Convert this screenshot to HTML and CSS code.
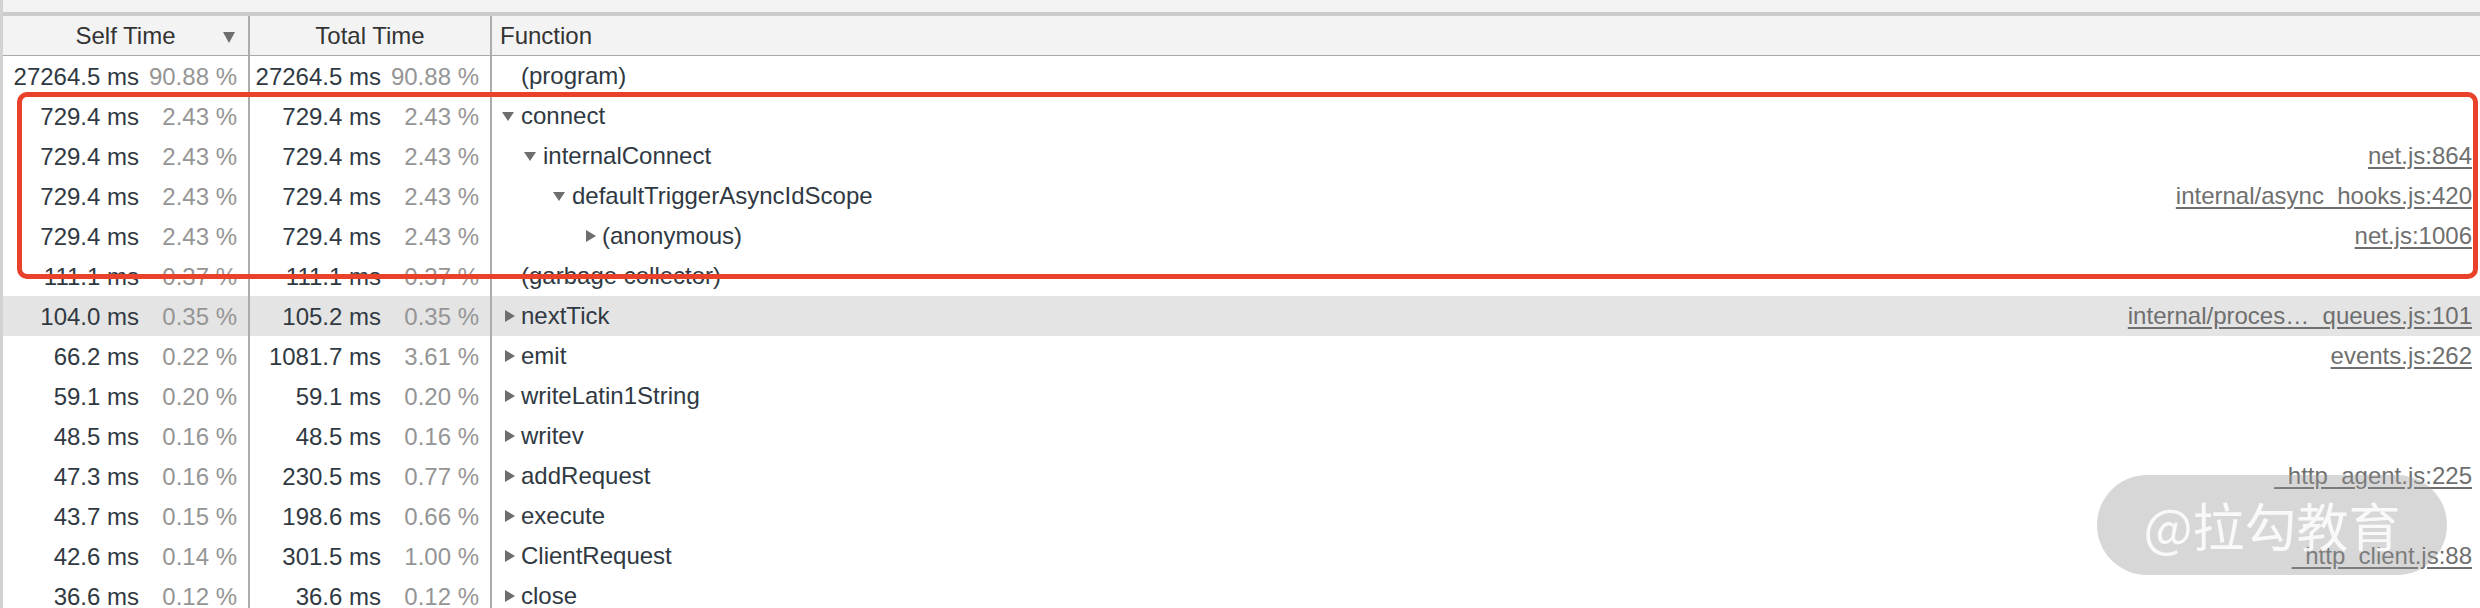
FILE: index.html
```html
<!DOCTYPE html>
<html lang="en">
<head>
<meta charset="utf-8">
<title>Bottom-Up Profile</title>
<link rel="stylesheet" href="styles.css">
</head>
<body>
<div class="panel">
  <div class="toolbar"></div>
  <div class="grid">
    <div class="row head">
      <div class="cell hcell sortable"><span></span><span class="htext">Self Time</span><span class="sort-arrow"></span></div>
      <div class="cell hcell"><span class="htext">Total Time</span></div>
      <div class="cell hfn">Function</div>
    </div>

    <div class="row">
      <div class="cell num"><span class="ms">27264.5 ms</span><span class="pct">90.88 %</span></div>
      <div class="cell num"><span class="ms">27264.5 ms</span><span class="pct">90.88 %</span></div>
      <div class="cell fn d0"><span class="tw"></span><span class="name">(program)</span></div>
    </div>
    <div class="row">
      <div class="cell num"><span class="ms">729.4 ms</span><span class="pct">2.43 %</span></div>
      <div class="cell num"><span class="ms">729.4 ms</span><span class="pct">2.43 %</span></div>
      <div class="cell fn d0"><span class="tw open"></span><span class="name">connect</span></div>
    </div>
    <div class="row">
      <div class="cell num"><span class="ms">729.4 ms</span><span class="pct">2.43 %</span></div>
      <div class="cell num"><span class="ms">729.4 ms</span><span class="pct">2.43 %</span></div>
      <div class="cell fn d1"><span class="tw open"></span><span class="name">internalConnect</span><a class="src">net.js:864</a></div>
    </div>
    <div class="row">
      <div class="cell num"><span class="ms">729.4 ms</span><span class="pct">2.43 %</span></div>
      <div class="cell num"><span class="ms">729.4 ms</span><span class="pct">2.43 %</span></div>
      <div class="cell fn d2"><span class="tw open"></span><span class="name">defaultTriggerAsyncIdScope</span><a class="src">internal/async_hooks.js:420</a></div>
    </div>
    <div class="row">
      <div class="cell num"><span class="ms">729.4 ms</span><span class="pct">2.43 %</span></div>
      <div class="cell num"><span class="ms">729.4 ms</span><span class="pct">2.43 %</span></div>
      <div class="cell fn d3"><span class="tw closed"></span><span class="name">(anonymous)</span><a class="src">net.js:1006</a></div>
    </div>
    <div class="row">
      <div class="cell num"><span class="ms">111.1 ms</span><span class="pct">0.37 %</span></div>
      <div class="cell num"><span class="ms">111.1 ms</span><span class="pct">0.37 %</span></div>
      <div class="cell fn d0"><span class="tw"></span><span class="name">(garbage collector)</span></div>
    </div>
    <div class="row selected">
      <div class="cell num"><span class="ms">104.0 ms</span><span class="pct">0.35 %</span></div>
      <div class="cell num"><span class="ms">105.2 ms</span><span class="pct">0.35 %</span></div>
      <div class="cell fn d0"><span class="tw closed"></span><span class="name">nextTick</span><a class="src">internal/proces…_queues.js:101</a></div>
    </div>
    <div class="row">
      <div class="cell num"><span class="ms">66.2 ms</span><span class="pct">0.22 %</span></div>
      <div class="cell num"><span class="ms">1081.7 ms</span><span class="pct">3.61 %</span></div>
      <div class="cell fn d0"><span class="tw closed"></span><span class="name">emit</span><a class="src">events.js:262</a></div>
    </div>
    <div class="row">
      <div class="cell num"><span class="ms">59.1 ms</span><span class="pct">0.20 %</span></div>
      <div class="cell num"><span class="ms">59.1 ms</span><span class="pct">0.20 %</span></div>
      <div class="cell fn d0"><span class="tw closed"></span><span class="name">writeLatin1String</span></div>
    </div>
    <div class="row">
      <div class="cell num"><span class="ms">48.5 ms</span><span class="pct">0.16 %</span></div>
      <div class="cell num"><span class="ms">48.5 ms</span><span class="pct">0.16 %</span></div>
      <div class="cell fn d0"><span class="tw closed"></span><span class="name">writev</span></div>
    </div>
    <div class="row">
      <div class="cell num"><span class="ms">47.3 ms</span><span class="pct">0.16 %</span></div>
      <div class="cell num"><span class="ms">230.5 ms</span><span class="pct">0.77 %</span></div>
      <div class="cell fn d0"><span class="tw closed"></span><span class="name">addRequest</span><a class="src">_http_agent.js:225</a></div>
    </div>
    <div class="row">
      <div class="cell num"><span class="ms">43.7 ms</span><span class="pct">0.15 %</span></div>
      <div class="cell num"><span class="ms">198.6 ms</span><span class="pct">0.66 %</span></div>
      <div class="cell fn d0"><span class="tw closed"></span><span class="name">execute</span></div>
    </div>
    <div class="row">
      <div class="cell num"><span class="ms">42.6 ms</span><span class="pct">0.14 %</span></div>
      <div class="cell num"><span class="ms">301.5 ms</span><span class="pct">1.00 %</span></div>
      <div class="cell fn d0"><span class="tw closed"></span><span class="name">ClientRequest</span><a class="src">_http_client.js:88</a></div>
    </div>
    <div class="row">
      <div class="cell num"><span class="ms">36.6 ms</span><span class="pct">0.12 %</span></div>
      <div class="cell num"><span class="ms">36.6 ms</span><span class="pct">0.12 %</span></div>
      <div class="cell fn d0"><span class="tw closed"></span><span class="name">close</span></div>
    </div>
  </div>

  <div class="highlight-box"></div>
  <div class="watermark">@拉勾教育</div>
</div>
</body>
</html>
```

FILE: styles.css
```css
html, body {
  margin: 0;
  padding: 0;
  background: #ffffff;
}

body {
  width: 2480px;
  height: 608px;
  overflow: hidden;
  font-family: "Liberation Sans", Arial, sans-serif;
  font-size: 24px;
  color: #303942;
}

.panel {
  position: relative;
  width: 2480px;
  height: 608px;
  box-sizing: border-box;
  border-left: 3px solid #d2d2d2;
}

.toolbar {
  height: 12px;
  background: #f3f3f3;
  border-bottom: 4px solid #cccccc;
}

.row {
  display: grid;
  grid-template-columns: 247px 242px 1fr;
  height: 40px;
  line-height: 42px;
}

.row.selected {
  background: #e4e4e4;
}

.cell {
  box-sizing: border-box;
  height: 40px;
  white-space: nowrap;
  overflow: hidden;
}

.cell.num {
  border-right: 2px solid #acacac;
  display: flex;
  justify-content: flex-end;
  padding-right: 11px;
}

.ms {
  color: #303942;
}

.pct {
  width: 98px;
  text-align: right;
  color: #959595;
}

/* header */
.row.head {
  height: 40px;
  background: #f3f3f3;
  border-bottom: 1px solid #a9a9a9;
  box-sizing: border-box;
  line-height: 40px;
  color: #333333;
}

.row.head .cell {
  height: 39px;
}

.hcell {
  border-right: 2px solid #acacac;
  display: flex;
  justify-content: center;
}

.hcell.sortable {
  display: grid;
  grid-template-columns: 1fr auto 1fr;
  align-items: center;
  padding-right: 13px;
  padding-left: 13px;
}

.sort-arrow {
  justify-self: end;
  width: 0;
  height: 0;
  border-left: 6px solid transparent;
  border-right: 6px solid transparent;
  border-top: 11px solid #6e6e6e;
  margin-top: 2px;
}

.hfn {
  padding-left: 8px;
}

/* function column */
.cell.fn {
  display: flex;
  align-items: center;
  padding-right: 8px;
}

.fn.d0 { padding-left: 9px; }
.fn.d1 { padding-left: 31px; }
.fn.d2 { padding-left: 60px; }
.fn.d3 { padding-left: 90px; }

.tw {
  flex: 0 0 20px;
  height: 40px;
  display: flex;
  align-items: center;
}

.tw.open::before {
  content: "";
  width: 0;
  height: 0;
  margin-left: 1px;
  border-left: 6.5px solid transparent;
  border-right: 6.5px solid transparent;
  border-top: 9px solid #6e6e6e;
}

.tw.closed::before {
  content: "";
  width: 0;
  height: 0;
  margin-left: 4px;
  border-top: 6.5px solid transparent;
  border-bottom: 6.5px solid transparent;
  border-left: 10px solid #6e6e6e;
}

.name {
  color: #303942;
}

.src {
  margin-left: auto;
  color: #6f6f6f;
  text-decoration: underline;
  text-underline-offset: 3px;
}

/* annotation overlays */
.highlight-box {
  position: absolute;
  left: 14px;
  top: 92px;
  width: 2461px;
  height: 187px;
  box-sizing: border-box;
  border: 5px solid #ea412a;
  border-radius: 10px;
  pointer-events: none;
}

.watermark {
  position: absolute;
  left: 2094px;
  top: 475px;
  width: 350px;
  height: 100px;
  border-radius: 50px;
  background: rgba(150, 150, 150, 0.38);
  color: rgba(255, 255, 255, 0.85);
  font-family: "Noto Sans CJK SC", "Liberation Sans", sans-serif;
  font-size: 52px;
  line-height: 100px;
  text-align: center;
  filter: blur(0.7px);
  pointer-events: none;
}
```
